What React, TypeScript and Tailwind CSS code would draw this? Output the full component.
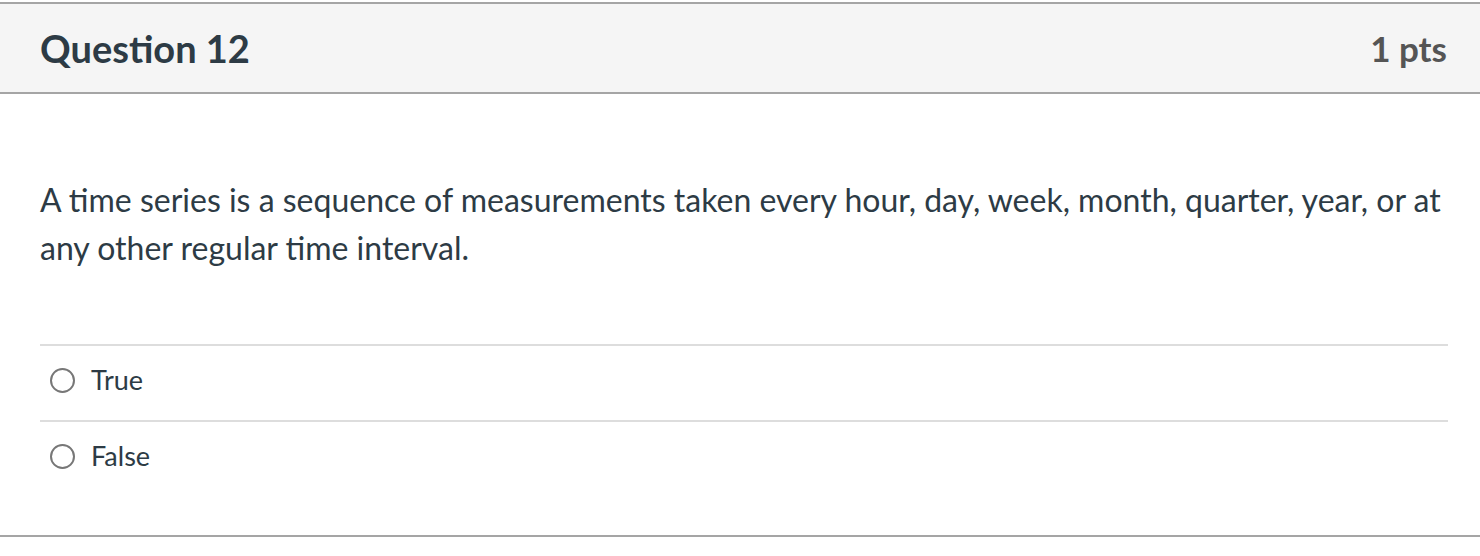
export default function App() {
  const answers = ["True", "False"]

  return (
    <div className="w-[1480px] h-[556px] bg-white pt-[2px] font-['Lato','Noto_Sans',sans-serif] text-[#2d3b45]">
      {/* Header */}
      <div className="flex h-[92px] items-center justify-between border-y-2 border-[#a5a5a5] bg-[#f5f5f5] pl-[40px] pr-[33px]">
        <h2 className="text-[38px] font-bold leading-none">Question 12</h2>
        <div className="text-[35px] font-bold leading-none text-[#555555]">1 pts</div>
      </div>

      {/* Body */}
      <div className="pl-[40px] pr-[32px] pb-[2px]">
        <p className="pt-[82px] text-[32px] leading-[48px]">
          A time series is a sequence of measurements taken every hour, day, week, month, quarter, year, or at any other
          regular time interval.
        </p>

        <div className="mt-[72px]">
          {answers.map((a) => (
            <div key={a} className="flex h-[76px] items-center border-t-2 border-[#dddddd] pb-[5px] pl-[10px]">
              <span className="h-[25px] w-[25px] rounded-full border-2 border-[#777777]" />
              <span className="ml-[16px] text-[27px]">{a}</span>
            </div>
          ))}
        </div>
      </div>

      <div className="mt-[37px] border-t-2 border-[#a5a5a5]" />
    </div>
  )
}
